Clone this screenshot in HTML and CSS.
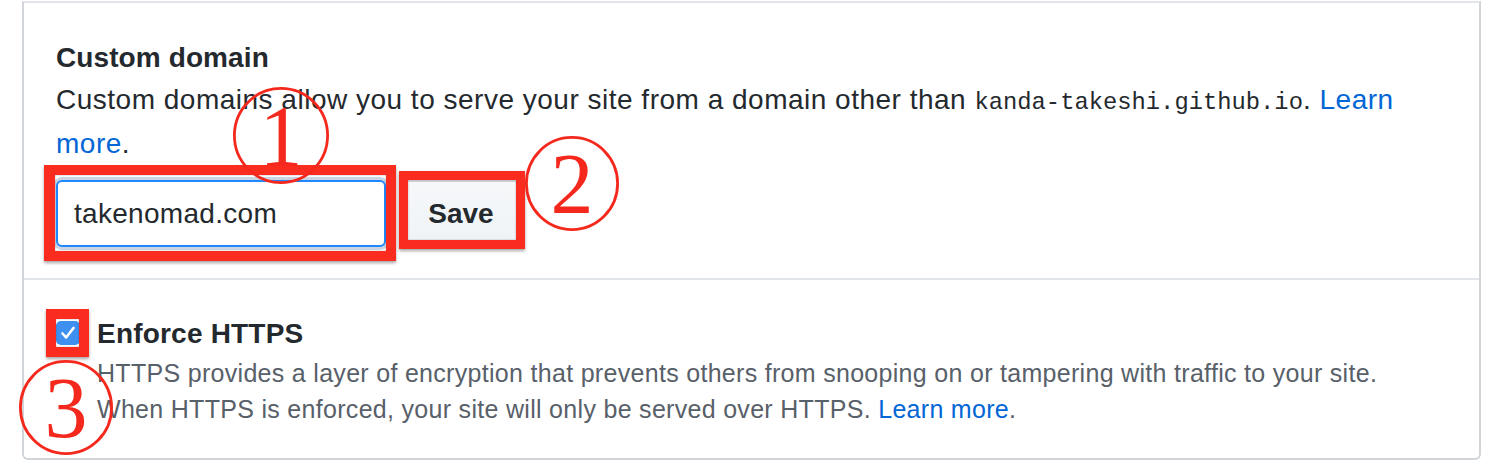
FILE: index.html
```html
<!DOCTYPE html>
<html lang="en">
<head>
<meta charset="utf-8">
<title>GitHub Pages settings</title>
<link rel="stylesheet" href="styles.css">
</head>
<body>
<div class="page">
  <div class="box">
    <section class="section">
      <h3 class="title">Custom domain</h3>
      <p class="desc">Custom domains allow you to serve your site from a domain other than <code>kanda-takeshi.github.io</code>. <a href="#">Learn<br>more</a>.</p>
      <form class="domain-form">
        <input class="input" type="text" value="takenomad.com">
        <button class="btn" type="button">Save</button>
      </form>
    </section>
    <section class="section">
      <label class="check-row">
        <span class="checkbox"><svg viewBox="0 0 24 24" width="24" height="24"><path d="M6.5 12.5l3.6 4L17.5 7" fill="none" stroke="#fff" stroke-width="2.6" stroke-linecap="round" stroke-linejoin="round"/></svg></span>
        <span class="check-body">
          <span class="check-title">Enforce HTTPS</span>
          <span class="note">HTTPS provides a layer of encryption that prevents others from snooping on or tampering with traffic to your site.<br>When HTTPS is enforced, your site will only be served over HTTPS. <a href="#">Learn more</a>.</span>
        </span>
      </label>
    </section>
  </div>

  <div class="mark mark-1"></div>
  <div class="mark mark-2"></div>
  <div class="mark mark-3"></div>

  <div class="num num-1"><svg class="ring" viewBox="0 0 96 97"><ellipse cx="48" cy="48.5" rx="46.6" ry="47.1"/></svg><span class="digit">1</span></div>
  <div class="num num-2"><svg class="ring" viewBox="0 0 94 95"><ellipse cx="47" cy="47.5" rx="45.6" ry="46.1"/></svg><span class="digit">2</span></div>
  <div class="num num-3"><svg class="ring" viewBox="0 0 94 95"><ellipse cx="47" cy="47.5" rx="45.6" ry="46.1"/></svg><span class="digit">3</span></div>
</div>
</body>
</html>
```
FILE: styles.css
```css
* { box-sizing: border-box; }
html, body { margin: 0; padding: 0; background: #fff; }
body {
  font-family: "Liberation Sans", Arial, sans-serif;
  color: #24292e;
  width: 1488px;
  height: 470px;
  overflow: hidden;
}
.page { position: relative; width: 1488px; height: 470px; padding-top: 1px; }

.box {
  margin-left: 22px;
  width: 1459px;
  border: 2px solid #d1d5da;
  border-top-color: #e1e4e8;
  border-radius: 0 0 6px 6px;
}
.section { padding: 34px 32px 31px; }
.section + .section { border-top: 2px solid #e1e4e8; padding-top: 33px; }

.title { margin: 0; font-size: 28px; line-height: 42px; font-weight: 700; letter-spacing: 0.1px; }
.desc { margin: 0; font-size: 28px; line-height: 41px; letter-spacing: 0.5px; }
.desc code { font-family: "Liberation Mono", "DejaVu Sans Mono", monospace; font-size: 23.8px; letter-spacing: 0; }
a { color: #0366d6; text-decoration: none; }

.domain-form { display: flex; align-items: center; gap: 16px; margin-top: 16px; }
.input {
  width: 330px;
  height: 67px;
  padding: 0 16px;
  border: 2px solid #2188ff;
  border-radius: 6px;
  box-shadow: 0 0 0 3px rgba(140, 160, 190, 0.45);
  font-family: "Liberation Sans", Arial, sans-serif;
  font-size: 28px;
  letter-spacing: 0.3px;
  color: #24292e;
  outline: none;
}
.btn {
  height: 67px;
  width: 118px;
  border: 2px solid #d1d5da;
  border-radius: 6px;
  background: linear-gradient(#f6f8fa, #eff3f6);
  font-family: "Liberation Sans", Arial, sans-serif;
  font-size: 28px;
  font-weight: 700;
  color: #24292e;
}

.check-row { display: flex; gap: 17px; }
.checkbox {
  flex: none;
  width: 24px; height: 24px;
  margin-top: 8px;
  border-radius: 5px;
  background: #3d8ff0;
  display: flex;
}
.check-body { display: flex; flex-direction: column; }
.check-title { font-size: 28px; line-height: 42px; font-weight: 700; letter-spacing: 0.2px; }
.note { font-size: 25px; line-height: 36px; color: #586069; letter-spacing: 0.3px; }

/* annotation overlays */
.mark {
  position: absolute;
  border: 10px solid #fa2b1f;
  box-shadow: 0 2px 3px rgba(0,0,0,0.35), inset 0 0 2px rgba(0,0,0,0.3);
}
.mark-1 { left: 44px; top: 165px; width: 352px; height: 96px; border-width: 10px 10px 10px 11px; }
.mark-2 { left: 399px; top: 171px; width: 126px; height: 78px; border-width: 9px; }
.mark-3 { left: 46px; top: 309px; width: 43px; height: 48px; }

.num { position: absolute; display: flex; align-items: center; justify-content: center; }
.ring { position: absolute; inset: 0; width: 100%; height: 100%; }
.ring ellipse { fill: none; stroke: #f5281d; stroke-width: 2.8; }
.digit {
  position: relative;
  font-family: "Liberation Serif", "Times New Roman", serif;
  font-size: 86px;
  line-height: 1;
  color: #f5281d;
}
.num-1 { left: 233px; top: 87px; width: 96px; height: 97px; }
.num-2 { left: 525px; top: 136px; width: 94px; height: 95px; }
.num-3 { left: 19px; top: 360px; width: 94px; height: 95px; }
```
